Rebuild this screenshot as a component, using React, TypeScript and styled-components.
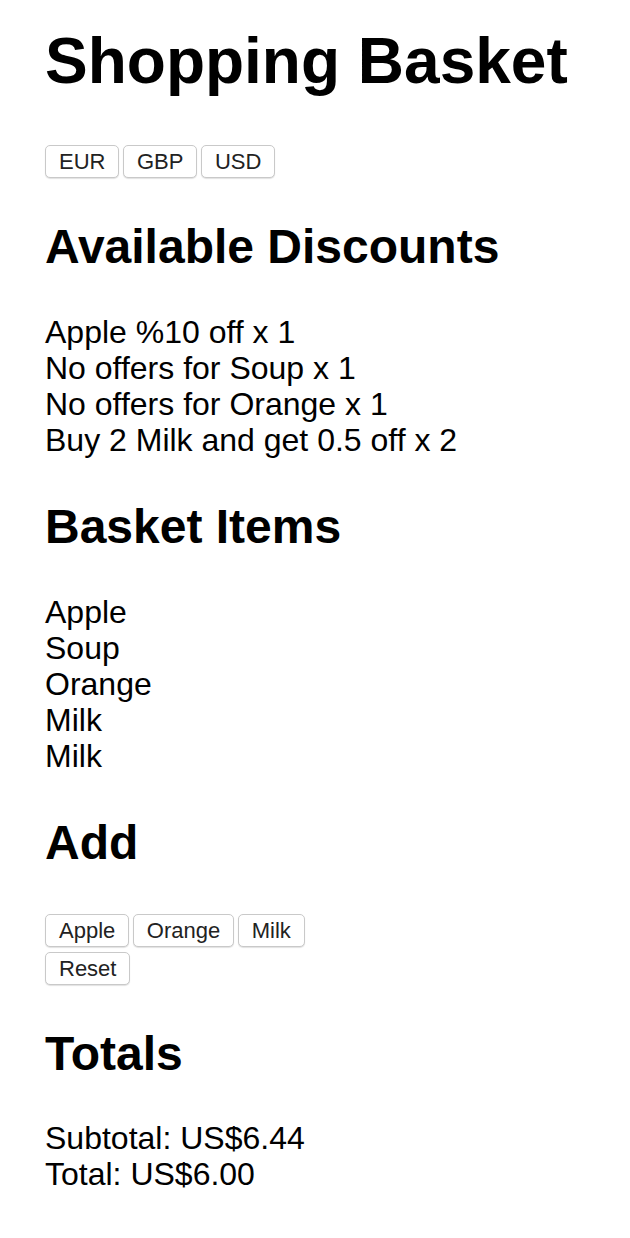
import React from "react";
import styled, { createGlobalStyle } from "styled-components";

const Global = createGlobalStyle`
  html, body { margin: 0; padding: 0; background: #fff; }
  body { font-family: "Liberation Sans", Arial, Helvetica, sans-serif; color: #000; }
`;

const Page = styled.div`
  padding: 24px 45px 40px 45px;
`;

const Title = styled.h1`
  margin: 0;
  font-size: 64px;
  line-height: 74px;
  font-weight: bold;
`;

const Heading = styled.h2<{ $gap: number }>`
  margin: ${(p) => p.$gap}px 0 0 0;
  font-size: 48px;
  line-height: 55px;
  font-weight: bold;
`;

const ButtonGroup = styled.div<{ $gap: number }>`
  display: flex;
  flex-direction: column;
  gap: 5px;
  margin-top: ${(p) => p.$gap}px;
`;

const ButtonRow = styled.div`
  display: flex;
  gap: 3.5px;
`;

const Button = styled.button`
  box-sizing: border-box;
  height: 33px;
  padding: 0 13px;
  border: 1px solid #c9c9c9;
  border-radius: 5px;
  background: #fff;
  box-shadow: 0 1px 1px rgba(0, 0, 0, 0.12);
  font-family: "Liberation Sans", Arial, Helvetica, sans-serif;
  font-size: 22px;
  color: #222;
  line-height: 1;
  cursor: pointer;
`;

const Lines = styled.div<{ $gap: number }>`
  margin-top: ${(p) => p.$gap}px;
  font-size: 32px;
  line-height: 36px;
`;

const Line = styled.div``;

const discounts = [
  "Apple %10 off x 1",
  "No offers for Soup x 1",
  "No offers for Orange x 1",
  "Buy 2 Milk and get 0.5 off x 2",
];

const items = ["Apple", "Soup", "Orange", "Milk", "Milk"];

export default function App() {
  return (
    <>
      <Global />
      <Page>
        <Title>Shopping Basket</Title>
        <ButtonGroup $gap={47}>
          <ButtonRow>
            <Button>EUR</Button>
            <Button>GBP</Button>
            <Button>USD</Button>
          </ButtonRow>
        </ButtonGroup>

        <Heading $gap={41}>Available Discounts</Heading>
        <Lines $gap={40}>
          {discounts.map((d) => (
            <Line key={d}>{d}</Line>
          ))}
        </Lines>

        <Heading $gap={41}>Basket Items</Heading>
        <Lines $gap={40}>
          {items.map((d, i) => (
            <Line key={i}>{d}</Line>
          ))}
        </Lines>

        <Heading $gap={41}>Add</Heading>
        <ButtonGroup $gap={44}>
          <ButtonRow>
            <Button>Apple</Button>
            <Button>Orange</Button>
            <Button>Milk</Button>
          </ButtonRow>
          <ButtonRow>
            <Button>Reset</Button>
          </ButtonRow>
        </ButtonGroup>

        <Heading $gap={41}>Totals</Heading>
        <Lines $gap={39}>
          <Line>Subtotal: US$6.44</Line>
          <Line>Total: US$6.00</Line>
        </Lines>
      </Page>
    </>
  );
}
